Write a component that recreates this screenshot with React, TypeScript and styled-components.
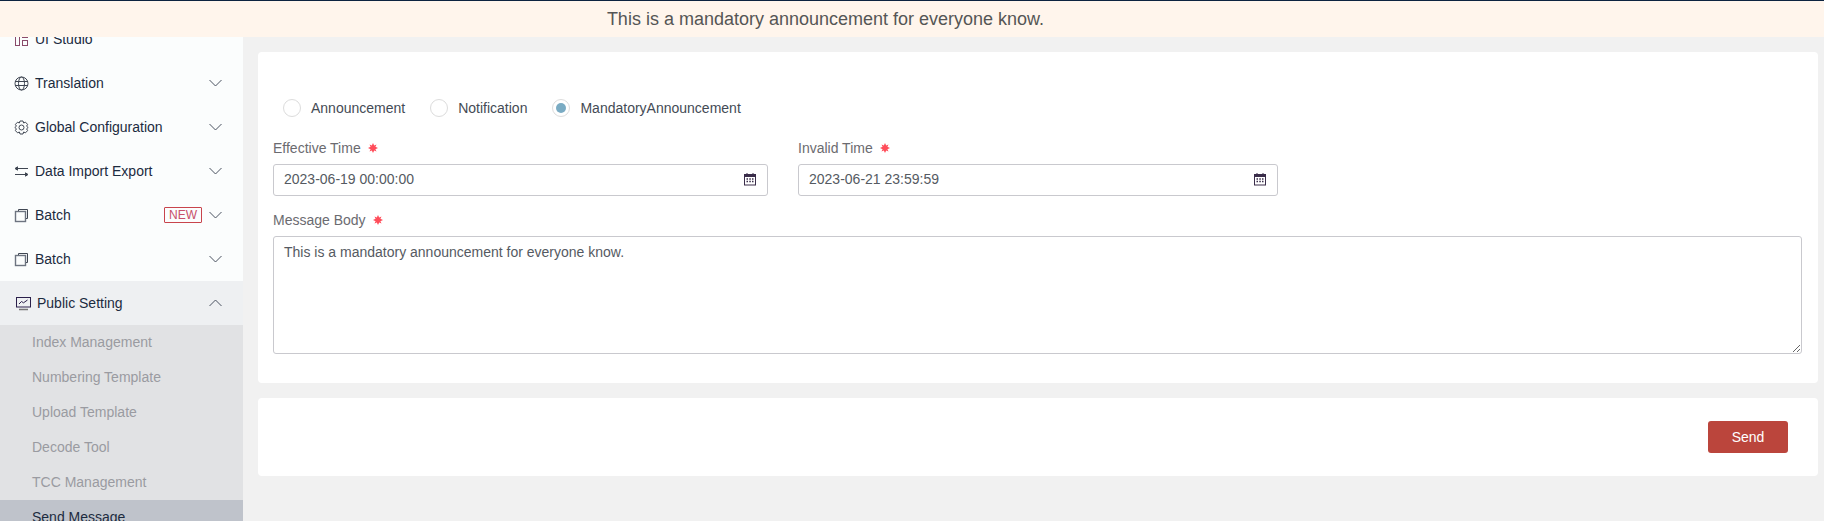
import React from 'react';
import styled, { createGlobalStyle } from 'styled-components';

const GlobalStyle = createGlobalStyle`
	html, body {
		margin: 0;
		padding: 0;
		height: 100%;
		overflow: hidden;
		background: #f1f1f1;
		font-family: "Liberation Sans", Arial, sans-serif;
		font-size: 14px;
	}
	* {
		box-sizing: border-box;
	}
`;

const Page = styled.div`
	display: flex;
	flex-direction: column;
	height: 521px;
	overflow: hidden;
	border-top: 1px solid #0c2340;
`;

const Banner = styled.div`
	flex: none;
	height: 36px;
	display: flex;
	align-items: center;
	justify-content: center;
	padding-right: 173px;
	background: #fff5ec;
	color: #555;
	font-size: 18px;
`;

const Body = styled.div`
	flex: 1;
	display: flex;
	min-height: 0;
`;

const Sidebar = styled.nav`
	flex: none;
	width: 243px;
	overflow: hidden;
	background: #fbfdfd;
`;

const SidebarScroll = styled.div`
	margin-top: -20px;
`;

const MenuRow = styled.div<{ $open?: boolean }>`
	display: flex;
	align-items: center;
	height: 44px;
	padding-left: ${p => (p.$open ? '16px' : '14px')};
	padding-right: 21px;
	color: #1c2b3f;
	background: ${p => (p.$open ? '#eef0f2' : 'transparent')};
`;

const MenuIcon = styled.svg`
	flex: none;
	width: 15px;
	height: 15px;
	margin-right: 6px;
	fill: none;
	stroke: #3f4652;
	stroke-width: 1;
`;

const MenuLabel = styled.span`
	flex: 1;
`;

const NewBadge = styled.span`
	width: 38px;
	height: 16px;
	margin-right: 7px;
	border: 1px solid #c8444c;
	border-radius: 1px;
	color: #c8506a;
	font-size: 12px;
	line-height: 15px;
	text-align: center;
`;

const Chevron = styled.svg`
	flex: none;
	width: 13px;
	height: 8px;
	fill: none;
	stroke: #4a5360;
	stroke-width: 1;
`;

const SubMenu = styled.div`
	background: #e1e2e4;
`;

const SubItem = styled.div<{ $active?: boolean }>`
	height: 35px;
	padding-left: 32px;
	line-height: 35px;
	color: ${p => (p.$active ? '#1c2b3f' : '#9a9ba1')};
	background: ${p => (p.$active ? '#bfc3cb' : 'transparent')};
`;

const Main = styled.main`
	flex: 1;
	min-width: 0;
	display: flex;
	flex-direction: column;
	gap: 15px;
	padding: 15px 6px 0 15px;
`;

const FormCard = styled.section`
	height: 331px;
	padding: 47px 16px 0 15px;
	background: #fff;
	border-radius: 4px;
`;

const RadioGroup = styled.div`
	display: flex;
	align-items: center;
	height: 18px;
	margin: 0 0 23px 10px;
`;

const RadioOption = styled.label`
	display: flex;
	align-items: center;
	gap: 10px;
	margin-right: 25px;
	color: #444b55;
`;

const RadioCircle = styled.span<{ $checked?: boolean }>`
	display: flex;
	align-items: center;
	justify-content: center;
	width: 18px;
	height: 18px;
	border: 1px solid #dcdcdc;
	border-radius: 50%;

	&::after {
		content: '';
		display: ${p => (p.$checked ? 'block' : 'none')};
		width: 10px;
		height: 10px;
		border-radius: 50%;
		background: #7aabc3;
	}
`;

const FieldRow = styled.div`
	display: flex;
	gap: 30px;
	margin-bottom: 16px;
`;

const Field = styled.div<{ $width: number }>`
	width: ${p => p.$width}px;
`;

const FieldLabel = styled.div`
	display: flex;
	align-items: center;
	height: 16px;
	margin-bottom: 8px;
	color: #6b6b70;
`;

const Required = styled.svg`
	width: 10px;
	height: 10px;
	margin-left: 7px;
	fill: #ff4d5a;
`;

const InputBox = styled.div`
	display: flex;
	align-items: center;
	height: 32px;
	padding: 0 10px;
	border: 1px solid #c9c9ce;
	border-radius: 3px;
`;

const DateInput = styled.input`
	flex: 1;
	min-width: 0;
	border: 0;
	outline: 0;
	padding: 0 0 2px;
	background: transparent;
	color: #555a62;
	font: inherit;
`;

const CalendarIcon = styled.svg`
	flex: none;
	width: 12px;
	height: 14px;
	margin: 0 1px 2px 0;
`;

const MessageInput = styled.textarea`
	display: block;
	width: 100%;
	height: 118px;
	padding: 7px 10px;
	border: 1px solid #c9c9ce;
	border-radius: 3px;
	outline: 0;
	color: #555a62;
	font: inherit;
	line-height: 16px;
`;

const ActionCard = styled.section`
	display: flex;
	align-items: center;
	justify-content: flex-end;
	height: 78px;
	padding-right: 30px;
	background: #fff;
	border-radius: 4px;
`;

const SendButton = styled.button`
	width: 80px;
	height: 32px;
	border: 0;
	border-radius: 3px;
	background: #bb453c;
	color: #fff;
	font: inherit;
`;

function Down() {
	return (
		<Chevron viewBox="0 0 13 8">
			<path d="M0.5 1 L6.5 7 L12.5 1" />
		</Chevron>
	);
}

function Up() {
	return (
		<Chevron viewBox="0 0 13 8">
			<path d="M0.5 7 L6.5 1 L12.5 7" />
		</Chevron>
	);
}

function BatchIcon() {
	return (
		<MenuIcon viewBox="0 0 15 15">
			<path d="M4.5 3.5 V1.5 H13.5 V10.5 H11.5" />
			<rect x="1.5" y="3.5" width="10" height="10" stroke="#6d7480" strokeWidth="1.4" />
		</MenuIcon>
	);
}

function RequiredMark() {
	return (
		<Required viewBox="0 0 10 10">
			<path d="M5 0 L6.2 2.6 L8.5 1.5 L7.4 3.8 L10 5 L7.4 6.2 L8.5 8.5 L6.2 7.4 L5 10 L3.8 7.4 L1.5 8.5 L2.6 6.2 L0 5 L2.6 3.8 L1.5 1.5 L3.8 2.6 Z" />
		</Required>
	);
}

function Calendar() {
	return (
		<CalendarIcon viewBox="0 0 12 14">
			<rect x="0.5" y="2.5" width="11" height="10.5" fill="none" stroke="#3a2d4a" />
			<rect x="0.5" y="2.5" width="11" height="2.5" fill="#3a2d4a" />
			<path d="M3 1 V3 M9 1 V3" stroke="#3a2d4a" />
			<path d="M2.5 7 H4 M5.3 7 H6.8 M8 7 H9.5 M2.5 9.5 H4 M5.3 9.5 H6.8 M8 9.5 H9.5" stroke="#3a2d4a" strokeWidth="1.3" />
		</CalendarIcon>
	);
}

const subItems = ['Index Management', 'Numbering Template', 'Upload Template', 'Decode Tool', 'TCC Management'];

export default function App() {
	const message = 'This is a mandatory announcement for everyone know.';
	return (
		<Page>
			<GlobalStyle />
			<Banner>{message}</Banner>
			<Body>
				<Sidebar>
					<SidebarScroll>
						<MenuRow>
							<MenuIcon viewBox="0 0 15 15">
								<rect x="1.5" y="1.5" width="4" height="12" stroke="#8a4a6a" />
								<rect x="8.5" y="1.5" width="5" height="4" stroke="#8a4a6a" />
								<rect x="8.5" y="8.5" width="5" height="5" stroke="#8a4a6a" />
							</MenuIcon>
							<MenuLabel>UI Studio</MenuLabel>
						</MenuRow>
						<MenuRow>
							<MenuIcon viewBox="0 0 15 15">
								<circle cx="7.5" cy="7.5" r="6.5" />
								<ellipse cx="7.5" cy="7.5" rx="3" ry="6.5" />
								<path d="M1 5.5 H14 M1 9.5 H14" />
							</MenuIcon>
							<MenuLabel>Translation</MenuLabel>
							<Down />
						</MenuRow>
						<MenuRow>
							<MenuIcon viewBox="0 0 15 15">
								<path d="M6 1 H9 L9.6 3 L11.5 2.2 L13.6 4.4 L12.6 6.2 L14.2 7.5 L12.6 8.8 L13.6 10.6 L11.5 12.8 L9.6 12 L9 14 H6 L5.4 12 L3.5 12.8 L1.4 10.6 L2.4 8.8 L0.8 7.5 L2.4 6.2 L1.4 4.4 L3.5 2.2 L5.4 3 Z" />
								<circle cx="7.5" cy="7.5" r="2.5" />
							</MenuIcon>
							<MenuLabel>Global Configuration</MenuLabel>
							<Down />
						</MenuRow>
						<MenuRow>
							<MenuIcon viewBox="0 0 15 15">
								<path d="M3 4.5 H14 M1 10.5 H12" strokeWidth="1.2" />
								<path d="M1 4.5 L3.5 2.8 V6.2 Z M14 10.5 L11.5 8.8 V12.2 Z" fill="#3f4652" />
							</MenuIcon>
							<MenuLabel>Data Import Export</MenuLabel>
							<Down />
						</MenuRow>
						<MenuRow>
							<BatchIcon />
							<MenuLabel>Batch</MenuLabel>
							<NewBadge>NEW</NewBadge>
							<Down />
						</MenuRow>
						<MenuRow>
							<BatchIcon />
							<MenuLabel>Batch</MenuLabel>
							<Down />
						</MenuRow>
						<MenuRow $open>
							<MenuIcon viewBox="0 0 15 15">
								<rect x="0.5" y="1.5" width="14" height="9.5" stroke="#2a1f4a" />
								<path d="M3 8 L5.5 5.5 L7.5 6.8 L11.5 4" stroke="#2a1f4a" />
								<path d="M3 13.5 H12" stroke="#777" strokeWidth="1.5" />
							</MenuIcon>
							<MenuLabel>Public Setting</MenuLabel>
							<Up />
						</MenuRow>
						<SubMenu>
							{subItems.map(item => (
								<SubItem key={item}>{item}</SubItem>
							))}
							<SubItem $active>Send Message</SubItem>
						</SubMenu>
					</SidebarScroll>
				</Sidebar>
				<Main>
					<FormCard>
						<RadioGroup>
							<RadioOption>
								<RadioCircle />
								Announcement
							</RadioOption>
							<RadioOption>
								<RadioCircle />
								Notification
							</RadioOption>
							<RadioOption>
								<RadioCircle $checked />
								MandatoryAnnouncement
							</RadioOption>
						</RadioGroup>
						<FieldRow>
							<Field $width={495}>
								<FieldLabel>
									Effective Time
									<RequiredMark />
								</FieldLabel>
								<InputBox>
									<DateInput readOnly value="2023-06-19 00:00:00" />
									<Calendar />
								</InputBox>
							</Field>
							<Field $width={480}>
								<FieldLabel>
									Invalid Time
									<RequiredMark />
								</FieldLabel>
								<InputBox>
									<DateInput readOnly value="2023-06-21 23:59:59" />
									<Calendar />
								</InputBox>
							</Field>
						</FieldRow>
						<FieldLabel>
							Message Body
							<RequiredMark />
						</FieldLabel>
						<MessageInput readOnly value={message} />
					</FormCard>
					<ActionCard>
						<SendButton>Send</SendButton>
					</ActionCard>
				</Main>
			</Body>
		</Page>
	);
}
